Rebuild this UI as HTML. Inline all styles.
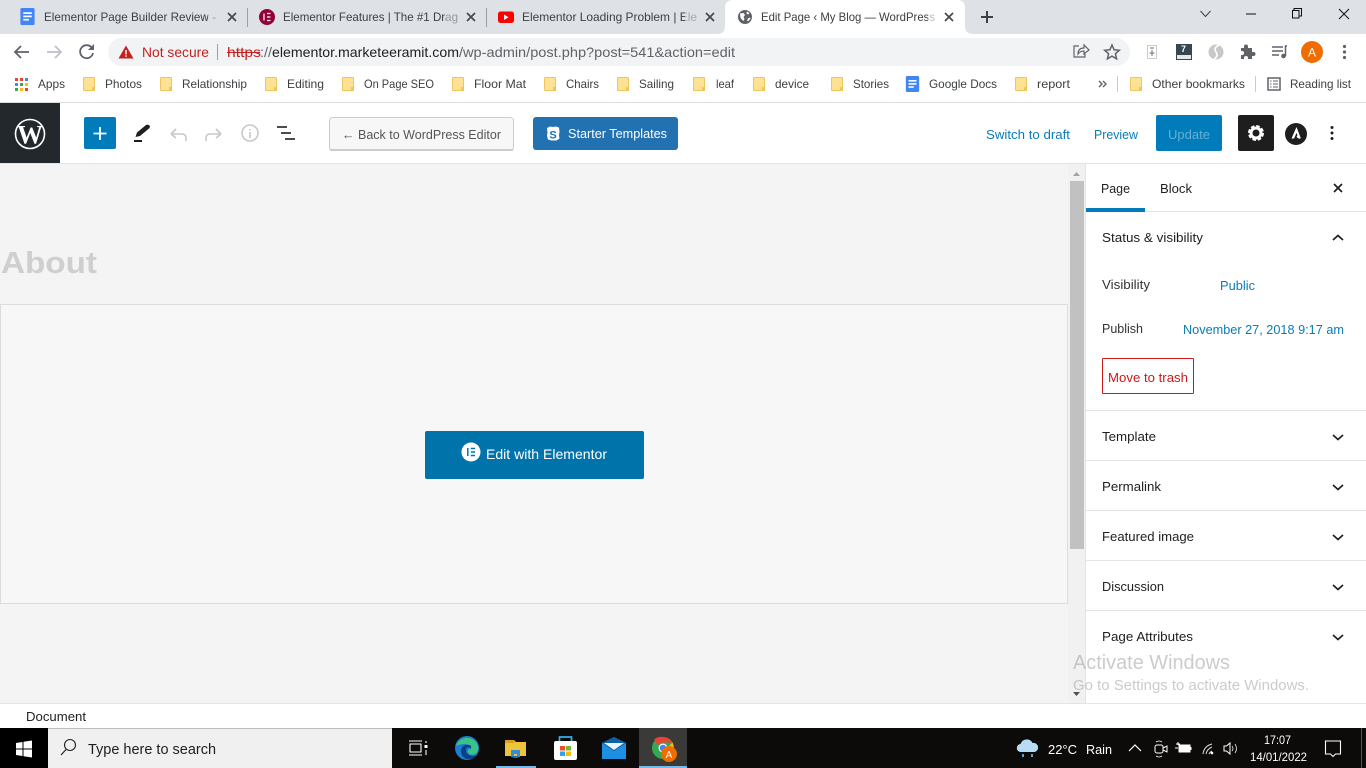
<!DOCTYPE html>
<html lang="en"><head><meta charset="utf-8"><title>Edit Page</title>
<style>
html,body{margin:0;padding:0;width:1366px;height:768px;overflow:hidden;background:#fff}
svg{display:block}
text{font-family:"Liberation Sans",sans-serif;white-space:pre}
.t{font-size:12px;fill:#3c4043}
.b{font-size:12px;fill:#3c4043}
.s{font-size:13px;fill:#1e1e1e}
.l{font-size:13px;fill:#0a7cb5}
</style></head><body>
<svg width="1366" height="768" viewBox="0 0 1366 768" xmlns="http://www.w3.org/2000/svg">
<defs>
<symbol id="f" viewBox="0 0 12 14"><path d="M.5 1.2q0-.7.7-.7h9.6q.7 0 .7.7v11.6q0 .7-.7.7H1.2q-.7 0-.7-.7z" fill="#fde293" stroke="#eec65c"/><rect x="9" y="10" width="3" height="4" fill="#eec65c"/></symbol>
<symbol id="doc" viewBox="0 0 15 18"><rect width="15" height="18" rx="1.5" fill="#4285f4"/><rect x="3" y="4.5" width="9" height="1.8" fill="#fff"/><rect x="3" y="8" width="9" height="1.8" fill="#fff"/><rect x="3" y="11.5" width="6" height="1.8" fill="#fff"/></symbol>
</defs>
<rect width="1366" height="34" fill="#dee1e6"/>
<rect y="34" width="1366" height="69" fill="#fff"/>
<rect y="102" width="1366" height="1" fill="#dcdcdc"/>
<!-- tabs -->
<use href="#doc" x="20" y="8" width="15" height="17"/>
<text class="t" x="44" y="21" textLength="172" lengthAdjust="spacingAndGlyphs">Elementor Page Builder Review -</text>
<rect x="208" y="8" width="10" height="18" fill="#dee1e6" opacity=".6"/>
<path d="M228 13l8 8M236 13l-8 8" stroke="#45484c" stroke-width="1.700"/>
<rect x="247" y="8" width="1" height="19" fill="#9aa0a6"/>
<circle cx="267" cy="17" r="8" fill="#92003b"/>
<path d="M264 13.500v7M267 13.500h3.500M267 17h3.500M267 20.500h3.500" stroke="#fff" stroke-width="1.200" fill="none"/>
<text class="t" x="283" y="21" textLength="175" lengthAdjust="spacingAndGlyphs">Elementor Features | The #1 Drag</text>
<rect x="446" y="8" width="12" height="18" fill="#dee1e6" opacity=".55"/>
<path d="M467 13l8 8M475 13l-8 8" stroke="#45484c" stroke-width="1.700"/>
<rect x="486" y="8" width="1" height="19" fill="#9aa0a6"/>
<rect x="498" y="11.500" width="16" height="11.500" rx="2.500" fill="#f00"/>
<path d="M504 14.500v5.500l4.500-2.700z" fill="#fff"/>
<text class="t" x="522" y="21" textLength="175" lengthAdjust="spacingAndGlyphs">Elementor Loading Problem | Ele</text>
<rect x="685" y="8" width="12" height="18" fill="#dee1e6" opacity=".65"/>
<path d="M706 13l8 8M714 13l-8 8" stroke="#45484c" stroke-width="1.700"/>
<path d="M717 34q8 0 8-8V8q0-8 8-8h224q8 0 8 8v18q0 8 8 8z" fill="#fff"/>
<circle cx="745" cy="17" r="7" fill="#5f6368"/>
<path d="M740 13.500l3.500-.5 1.500 2-1.500 2 1 2-1 2-3-3zM747 11.500l2.500 1.500-1.500 1.500-1.500-1zM748 18.500l2-1 .5 1-2 2.500-1.500 0z" fill="#fff"/>
<text class="t" x="761" y="21" textLength="174" lengthAdjust="spacingAndGlyphs">Edit Page ‹ My Blog — WordPress</text>
<rect x="928" y="8" width="8" height="18" fill="#fff" opacity=".65"/>
<path d="M945 13l8 8M953 13l-8 8" stroke="#45484c" stroke-width="1.700"/>
<path d="M987 11v12M981 17h12" stroke="#3c4043" stroke-width="2"/>
<path d="M1200.500 11l5 5.500 5-5.500" fill="none" stroke="#3c4043" stroke-width="1"/>
<path d="M1246 14h10" stroke="#111" stroke-width="1"/>
<path d="M1294 10.500V8.500h7.500v7.500h-2.500" fill="none" stroke="#111" stroke-width="1"/>
<rect x="1292.500" y="10.500" width="6.500" height="7.500" fill="none" stroke="#111" stroke-width="1"/>
<path d="M1339 9l10 10M1349 9l-10 10" stroke="#111" stroke-width="1"/>
<!-- toolbar -->
<path d="M29 52H15M21 46l-6 6 6 6" fill="none" stroke="#5f6368" stroke-width="1.800"/>
<path d="M47 52h14M55 46l6 6-6 6" fill="none" stroke="#bdc1c6" stroke-width="1.800"/>
<path d="M92 48a6.500 6.500 0 1 0 1 5" fill="none" stroke="#5f6368" stroke-width="1.800"/>
<path d="M94 44v6h-6z" fill="#5f6368"/>
<rect x="108" y="38" width="1022" height="28" rx="14" fill="#f1f3f4"/>
<path d="M126 45.500l7.500 13h-15z" fill="#c5221f"/>
<rect x="125.300" y="50" width="1.400" height="4.500" fill="#fff"/><rect x="125.300" y="55.300" width="1.400" height="1.500" fill="#fff"/>
<text x="142" y="57" font-size="14" fill="#c5221f" textLength="67" lengthAdjust="spacingAndGlyphs">Not secure</text>
<rect x="217" y="44" width="1" height="16" fill="#9aa0a6"/>
<text x="227" y="57" font-size="14" fill="#c5221f" textLength="34" lengthAdjust="spacingAndGlyphs">https</text>
<rect x="227" y="52" width="33" height="1" fill="#c5221f"/>
<text x="260" y="57" font-size="14" fill="#5f6368" textLength="12" lengthAdjust="spacingAndGlyphs">://</text>
<text x="272" y="57" font-size="14" fill="#202124" textLength="187" lengthAdjust="spacingAndGlyphs">elementor.marketeeramit.com</text>
<text x="459" y="57" font-size="14" fill="#5f6368" textLength="276" lengthAdjust="spacingAndGlyphs">/wp-admin/post.php?post=541&amp;action=edit</text>
<path d="M1079 46h-5v11h11v-3M1078 54q0-6 6-6v-3l5 5-5 4v-3q-4 0-6 3z" fill="none" stroke="#5f6368" stroke-width="1.200"/>
<path d="M1112 45l2.100 4.800 5.200.500-3.900 3.400 1.200 5.100-4.600-2.700-4.600 2.700 1.200-5.100-3.900-3.400 5.200-.500z" fill="none" stroke="#5f6368" stroke-width="1.500"/>
<rect x="1147.500" y="45.500" width="9" height="13" fill="#fff" stroke="#ccc"/>
<path d="M1150 48h4M1152 50v6M1149.500 53h5" stroke="#888" stroke-width="1.200"/>
<rect x="1176" y="44" width="16" height="16" fill="#37474f"/><rect x="1177" y="55" width="14" height="4" fill="#e4e8ea"/>
<text x="1181" y="52" font-size="9" font-weight="700" fill="#fff">7</text>
<circle cx="1216" cy="52" r="7.500" fill="#c8c8c8"/><path d="M1219 45q-6 3-3 7t-2 7" stroke="#fff" stroke-width="1.600" fill="none"/>
<path d="M1241 48h3v-1.500a2 2 0 0 1 4 0V48h4v4h1.500a2 2 0 0 1 0 4H1252v3h-4v-1a2 2 0 0 0-4 0v1h-3v-4h1a2 2 0 0 0 0-4h-1z" fill="#5f6368"/>
<path d="M1272 47h11M1272 51h11M1272 55h7" stroke="#5f6368" stroke-width="1.500"/>
<path d="M1287 46h-1.500v10" stroke="#5f6368" stroke-width="1.500" fill="none"/><circle cx="1283.500" cy="56" r="2.300" fill="#5f6368"/>
<circle cx="1312" cy="52" r="11" fill="#ef6c00"/>
<text x="1312" y="56.500" font-size="12" fill="#fff" text-anchor="middle">A</text>
<circle cx="1344.500" cy="46.500" r="1.600" fill="#5f6368"/><circle cx="1344.500" cy="52" r="1.600" fill="#5f6368"/><circle cx="1344.500" cy="57.500" r="1.600" fill="#5f6368"/>
<!-- bookmarks -->
<g>
<rect x="15" y="78" width="3" height="3" fill="#ea4335"/><rect x="20" y="78" width="3" height="3" fill="#ea4335"/><rect x="25" y="78" width="3" height="3" fill="#4285f4"/>
<rect x="15" y="83" width="3" height="3" fill="#4285f4"/><rect x="20" y="83" width="3" height="3" fill="#34a853"/><rect x="25" y="83" width="3" height="3" fill="#fbbc04"/>
<rect x="15" y="88" width="3" height="3" fill="#34a853"/><rect x="20" y="88" width="3" height="3" fill="#fbbc04"/><rect x="25" y="88" width="3" height="3" fill="#ea4335"/>
</g>
<text class="b" x="38" y="88" textLength="27" lengthAdjust="spacingAndGlyphs">Apps</text>
<use href="#f" x="83" y="77" width="12" height="14"/><text class="b" x="105" y="88" textLength="37" lengthAdjust="spacingAndGlyphs">Photos</text>
<use href="#f" x="160" y="77" width="12" height="14"/><text class="b" x="182" y="88" textLength="65" lengthAdjust="spacingAndGlyphs">Relationship</text>
<use href="#f" x="265" y="77" width="12" height="14"/><text class="b" x="287" y="88" textLength="37" lengthAdjust="spacingAndGlyphs">Editing</text>
<use href="#f" x="342" y="77" width="12" height="14"/><text class="b" x="364" y="88" font-size="12" textLength="70" lengthAdjust="spacingAndGlyphs">On Page SEO</text>
<use href="#f" x="452" y="77" width="12" height="14"/><text class="b" x="474" y="88" textLength="52" lengthAdjust="spacingAndGlyphs">Floor Mat</text>
<use href="#f" x="544" y="77" width="12" height="14"/><text class="b" x="566" y="88" textLength="33" lengthAdjust="spacingAndGlyphs">Chairs</text>
<use href="#f" x="617" y="77" width="12" height="14"/><text class="b" x="639" y="88" textLength="35" lengthAdjust="spacingAndGlyphs">Sailing</text>
<use href="#f" x="693" y="77" width="12" height="14"/><text class="b" x="716" y="88" textLength="18" lengthAdjust="spacingAndGlyphs">leaf</text>
<use href="#f" x="753" y="77" width="12" height="14"/><text class="b" x="775" y="88" textLength="34" lengthAdjust="spacingAndGlyphs">device</text>
<use href="#f" x="831" y="77" width="12" height="14"/><text class="b" x="853" y="88" textLength="36" lengthAdjust="spacingAndGlyphs">Stories</text>
<use href="#doc" x="905" y="76" width="15" height="16"/><text class="b" x="929" y="88" textLength="68" lengthAdjust="spacingAndGlyphs">Google Docs</text>
<use href="#f" x="1015" y="77" width="12" height="14"/><text class="b" x="1037" y="88" textLength="33" lengthAdjust="spacingAndGlyphs">report</text>
<path d="M1099 81l3 3-3 3M1103 81l3 3-3 3" fill="none" stroke="#5f6368" stroke-width="1.400"/>
<rect x="1117" y="76" width="1" height="16" fill="#c8cacc"/>
<use href="#f" x="1130" y="77" width="12" height="14"/><text class="b" x="1152" y="88" textLength="93" lengthAdjust="spacingAndGlyphs">Other bookmarks</text>
<rect x="1255" y="76" width="1" height="16" fill="#c8cacc"/>
<rect x="1268" y="78" width="12" height="12" fill="none" stroke="#5f6368" stroke-width="1.500"/>
<path d="M1270 81h1.500M1270 84h1.500M1270 87h1.500M1273 81h5M1273 84h5M1273 87h5" stroke="#5f6368"/>
<text class="b" x="1290" y="88" textLength="61" lengthAdjust="spacingAndGlyphs">Reading list</text>
<!-- editor header -->
<rect y="103" width="60" height="61" fill="#23282d"/>
<circle cx="30" cy="134" r="14.500" fill="none" stroke="#fff" stroke-width="1.600"/>
<text x="30" y="143.500" font-size="26" font-weight="700" fill="#fff" text-anchor="middle" style="font-family:'Liberation Serif',serif">W</text>
<rect x="84" y="117" width="32" height="32" rx="2" fill="#007cba"/>
<path d="M100 127v13M93.500 133.500h13" stroke="#fff" stroke-width="1.800"/>
<path d="M135.500 137l1.500-4.500 9-7.500q2-1 3.500.5q1 1.500-.5 3l-9 7.500z" fill="#1e1e1e"/>
<rect x="134" y="140" width="8" height="2" fill="#1e1e1e"/>
<path d="M171 133l5-5M171 133l5 4M171 133h11q4 0 4 4v3" fill="none" stroke="#c8c8c8" stroke-width="1.600" transform="translate(0 1)"/>
<path d="M221 133l-5-5M221 133l-5 4M221 133h-11q-4 0-4 4v3" fill="none" stroke="#c8c8c8" stroke-width="1.600" transform="translate(0 1)"/>
<circle cx="250" cy="133" r="8" fill="none" stroke="#c8c8c8" stroke-width="1.600"/>
<path d="M250 129v1.500M250 132v6" stroke="#c8c8c8" stroke-width="1.600"/>
<path d="M277 127h10M281 133h10M285 139h10" stroke="#333" stroke-width="1.800"/>
<rect x="329.500" y="117.500" width="184" height="33" rx="3" fill="#f7f7f7" stroke="#ccc"/>
<rect x="330" y="149" width="183" height="2" fill="#ccc"/>
<text x="342" y="139" font-size="13" fill="#555" textLength="159" lengthAdjust="spacingAndGlyphs">← Back to WordPress Editor</text>
<rect x="533" y="117" width="145" height="33" rx="3" fill="#2271b1"/>
<path d="M547 128l3-1.500 3 .5 3-.5 3 1 .5 4-.5 4 .5 3-3 2h-5l-3.500-1-1-4 .5-3z" fill="#fff"/>
<text x="553" y="138.500" font-size="11" font-weight="700" fill="#2271b1" text-anchor="middle">S</text>
<text x="568" y="138" font-size="13" fill="#fff" textLength="99" lengthAdjust="spacingAndGlyphs">Starter Templates</text>
<text class="l" x="986" y="139" textLength="84" lengthAdjust="spacingAndGlyphs">Switch to draft</text>
<text class="l" x="1094" y="139" textLength="44" lengthAdjust="spacingAndGlyphs">Preview</text>
<rect x="1156" y="115" width="66" height="36" rx="2" fill="#007cba"/>
<text x="1168" y="139" font-size="13" fill="#66b0d6" textLength="42" lengthAdjust="spacingAndGlyphs">Update</text>
<rect x="1238" y="115" width="36" height="36" rx="2" fill="#1e1e1e"/>
<circle cx="1256" cy="133" r="5" fill="none" stroke="#fff" stroke-width="3"/>
<circle cx="1256" cy="133" r="7" fill="none" stroke="#fff" stroke-width="2" stroke-dasharray="3.600 1.900"/>
<circle cx="1296" cy="134" r="11" fill="#1e1e1e"/>
<path d="M1296.500 127l-5 11.500h2.600l2.400-5.500 1 2-1 2 2 1.500h2.400z" fill="#fff"/>
<circle cx="1332" cy="127.500" r="1.500" fill="#1e1e1e"/><circle cx="1332" cy="133" r="1.500" fill="#1e1e1e"/><circle cx="1332" cy="138.500" r="1.500" fill="#1e1e1e"/>
<rect y="163" width="1366" height="1" fill="#e2e4e7"/>
<!-- content -->
<rect y="164" width="1086" height="539" fill="#f4f4f4"/>
<text x="1" y="273" font-size="31" font-weight="700" fill="#cfcfcf" textLength="96" lengthAdjust="spacingAndGlyphs">About</text>
<rect x=".5" y="304.500" width="1067" height="299" fill="#f7f7f7" stroke="#dcdcdc"/>
<rect x="425" y="431" width="219" height="48" rx="2" fill="#0073aa"/>
<circle cx="471" cy="452" r="9.500" fill="#fff"/>
<path d="M467.800 448v8M470.800 448.500h4.200M470.800 452h4.200M470.800 455.500h4.200" stroke="#0073aa" stroke-width="1.500"/>
<text x="486" y="459" font-size="14" fill="#fff" textLength="121" lengthAdjust="spacingAndGlyphs">Edit with Elementor</text>
<!-- scrollbar -->
<rect x="1068" y="164" width="17" height="539" fill="#f1f1f1"/>
<path d="M1073 176l3.500-4 3.500 4z" fill="#a3a3a3"/>
<rect x="1070" y="181" width="14" height="368" fill="#c1c1c1"/>
<path d="M1073 692l3.500 4 3.500-4z" fill="#505050"/>
<!-- sidebar -->
<rect x="1085" y="164" width="281" height="539" fill="#fff"/>
<rect x="1085" y="164" width="1" height="539" fill="#e2e4e7"/>
<text class="s" x="1101" y="193" textLength="29" lengthAdjust="spacingAndGlyphs">Page</text>
<text class="s" x="1160" y="193" textLength="32" lengthAdjust="spacingAndGlyphs">Block</text>
<path d="M1334 184l8 8M1342 184l-8 8" stroke="#1e1e1e" stroke-width="1.700"/>
<rect x="1086" y="211" width="280" height="1" fill="#e2e4e7"/>
<rect x="1086" y="208" width="59" height="4" fill="#007cba"/>
<text class="s" x="1102" y="242" textLength="101" lengthAdjust="spacingAndGlyphs">Status &amp; visibility</text>
<path d="M1333 240l5-4.500 5 4.500" fill="none" stroke="#1e1e1e" stroke-width="1.700"/>
<text class="s" x="1102" y="289" textLength="48" lengthAdjust="spacingAndGlyphs" style="fill:#333">Visibility</text>
<text class="l" x="1220" y="290" textLength="35" lengthAdjust="spacingAndGlyphs">Public</text>
<text class="s" x="1102" y="333" textLength="41" lengthAdjust="spacingAndGlyphs" style="fill:#333">Publish</text>
<text class="l" x="1183" y="334" textLength="161" lengthAdjust="spacingAndGlyphs">November 27, 2018 9:17 am</text>
<rect x="1102.500" y="358.500" width="91" height="35" rx="1" fill="#fff" stroke="#cc1818"/>
<text x="1108" y="382" font-size="13" fill="#cc1818" textLength="80" lengthAdjust="spacingAndGlyphs">Move to trash</text>
<g fill="#e2e4e7"><rect x="1086" y="410" width="280" height="1"/><rect x="1086" y="460" width="280" height="1"/><rect x="1086" y="510" width="280" height="1"/><rect x="1086" y="560" width="280" height="1"/><rect x="1086" y="610" width="280" height="1"/></g>
<text class="s" x="1102" y="441" textLength="54" lengthAdjust="spacingAndGlyphs">Template</text>
<text class="s" x="1102" y="491" textLength="59" lengthAdjust="spacingAndGlyphs">Permalink</text>
<text class="s" x="1102" y="541" textLength="92" lengthAdjust="spacingAndGlyphs">Featured image</text>
<text class="s" x="1102" y="591" textLength="62" lengthAdjust="spacingAndGlyphs">Discussion</text>
<text class="s" x="1102" y="641" textLength="91" lengthAdjust="spacingAndGlyphs">Page Attributes</text>
<g fill="none" stroke="#1e1e1e" stroke-width="1.700"><path d="M1333 435l5 4.500 5-4.500"/><path d="M1333 485l5 4.500 5-4.500"/><path d="M1333 535l5 4.500 5-4.500"/><path d="M1333 585l5 4.500 5-4.500"/><path d="M1333 635l5 4.500 5-4.500"/></g>
<text x="1073" y="669" font-size="20" fill="#a8a8a8" fill-opacity=".6" textLength="157" lengthAdjust="spacingAndGlyphs">Activate Windows</text>
<text x="1073" y="690" font-size="14.500" fill="#a8a8a8" fill-opacity=".6" textLength="236" lengthAdjust="spacingAndGlyphs">Go to Settings to activate Windows.</text>
<!-- footer -->
<rect y="703" width="1366" height="1" fill="#e2e4e7"/>
<rect y="704" width="1366" height="24" fill="#fff"/>
<text class="s" x="26" y="721" textLength="60" lengthAdjust="spacingAndGlyphs">Document</text>
<!-- taskbar -->
<rect y="728" width="1366" height="40" fill="#0c0b09"/>
<rect x="0" y="728" width="48" height="40" fill="#000"/>
<path d="M16 743l6.500-1v6.500H16zM23.500 741.800l8.500-1.300v8H23.500zM16 749.500h6.500v6.500L16 755zM23.500 749.500H32v8l-8.500-1.300z" fill="#fff"/>
<rect x="48" y="728" width="344" height="40" fill="#f0f0f0"/>
<rect x="48" y="728" width="344" height="1" fill="#bdbdbd"/>
<circle cx="70" cy="745" r="5.500" fill="none" stroke="#222" stroke-width="1.100"/>
<path d="M66 749.500l-5 5.500" stroke="#222" stroke-width="1.200"/>
<text x="88" y="754" font-size="15" fill="#1f1f1f" textLength="128" lengthAdjust="spacingAndGlyphs">Type here to search</text>
<!-- taskbar icons -->
<path d="M409 741h13M409 755h13M410 744h11v8h-11zM426 741v2M426 750v5" fill="none" stroke="#fff" stroke-width="1.100"/>
<rect x="424.500" y="745" width="3" height="3" fill="#fff"/>
<circle cx="467" cy="748" r="12" fill="#1a7fd0"/>
<path d="M456 746a11.500 11.500 0 0 1 22 0q1 6-3 8-6 2-7-2-1-3 3-3 0-5-6-5-5 0-9 2z" fill="#39c481"/>
<path d="M461 751q1-7 7-6 4 0 3 3-5-2-5 2 0 5 7 6 2 0 4-1-4 5-10 4-6-2-6-8z" fill="#0c3f86"/>
<path d="M505 740h9l2 2h10v14h-21z" fill="#f0c33c"/>
<path d="M505 740h9l1 3h-10z" fill="#d9a21b"/>
<path d="M511 757v-7h9v7h-3v-3h-3v3z" fill="#2f8fd6"/>
<rect x="513" y="756" width="5" height="2" fill="#1e6fb4"/>
<rect x="554" y="741" width="23" height="19" rx="2" fill="#fff"/>
<path d="M559.500 741v-4h12v4" fill="none" stroke="#2fb4e8" stroke-width="1.700"/>
<rect x="560" y="746" width="5" height="4.500" fill="#e8502f"/><rect x="566" y="746" width="5" height="4.500" fill="#7cb82f"/><rect x="560" y="751.500" width="5" height="4.500" fill="#2fa4e8"/><rect x="566" y="751.500" width="5" height="4.500" fill="#fbbc04"/>
<path d="M602 743l12-6 12 6v16h-24z" fill="#1d8fe0"/>
<path d="M602 743l12-6 12 6-12 8z" fill="#0f5fa8"/>
<path d="M604 743h20l-10 7z" fill="#e8f4fc"/>
<rect x="639" y="728" width="48" height="40" fill="#3a3a38"/>
<circle cx="663" cy="748" r="11" fill="#34a853"/>
<path d="M663 737a11 11 0 0 1 9.500 5.500H663a5 5 0 0 0-5 3l-4-6a11 11 0 0 1 9-2.500z" fill="#ea4335"/>
<path d="M672.500 742.500a11 11 0 0 1-4 14l-4-6z" fill="#fbbc04"/>
<circle cx="663" cy="748" r="4.500" fill="#fff"/><circle cx="663" cy="748" r="3.300" fill="#4285f4"/>
<circle cx="669" cy="754" r="8" fill="#ef6c00"/>
<text x="669" y="758" font-size="10" fill="#fff" text-anchor="middle">A</text>
<rect x="496" y="766" width="40" height="2" fill="#76b9ed"/>
<rect x="639" y="766" width="48" height="2" fill="#76b9ed"/>
<!-- tray -->
<path d="M1021 752a4 4 0 0 1-.5-8a6.500 6.500 0 0 1 12-1a4.500 4.500 0 0 1 2 9z" fill="#b9dcf5"/>
<path d="M1023 754v3M1032 754v3" stroke="#4fa3e0" stroke-width="2"/>
<text x="1048" y="754" font-size="13" fill="#fff" textLength="29" lengthAdjust="spacingAndGlyphs">22°C</text>
<text x="1086" y="754" font-size="13" fill="#fff" textLength="26" lengthAdjust="spacingAndGlyphs">Rain</text>
<path d="M1129 751l6-6 6 6" fill="none" stroke="#fff" stroke-width="1.200"/>
<rect x="1155" y="745" width="8" height="8" rx="2" fill="none" stroke="#fff"/>
<path d="M1163 748l4-2v6l-4-2z" fill="none" stroke="#fff"/>
<path d="M1156 742q3-2 6 0M1156 756q3 2 6 0" fill="none" stroke="#fff" stroke-width=".8"/>
<rect x="1179" y="745" width="11" height="7" fill="#fff" stroke="#fff"/><rect x="1190" y="747" width="1.500" height="3" fill="#fff"/>
<path d="M1176 744h4M1175 748h3M1178 742v3" stroke="#fff"/>
<path d="M1203 754q1-8 9-10M1206 754q1-5 6-7M1209 754q1-2 3-3" fill="none" stroke="#ddd" stroke-width="1"/><circle cx="1212" cy="753" r="1.300" fill="#fff"/>
<path d="M1224 746h2.500l3.500-3v11l-3.500-3H1224z" fill="none" stroke="#fff"/>
<path d="M1232 746q2 2.500 0 5M1235 744q3 4.500 0 9" fill="none" stroke="#ddd" stroke-width=".9"/>
<text x="1264" y="744" font-size="12" fill="#fff" textLength="27" lengthAdjust="spacingAndGlyphs">17:07</text>
<text x="1250" y="761" font-size="12" fill="#fff" textLength="57" lengthAdjust="spacingAndGlyphs">14/01/2022</text>
<path d="M1325.500 741h15v13h-5l-2.500 2.500-2.500-2.500h-5z" fill="none" stroke="#fff" stroke-width="1.100"/>
<rect x="1361" y="728" width="1" height="40" fill="#555"/>
</svg>
</body></html>
